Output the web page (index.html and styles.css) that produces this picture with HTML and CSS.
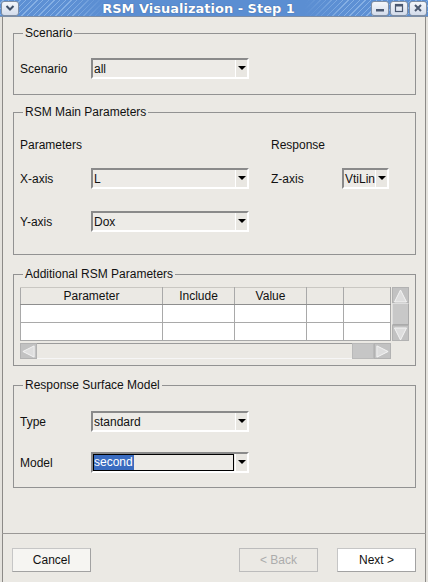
FILE: index.html
```html
<!DOCTYPE html>
<html lang="en">
<head>
    <meta charset="UTF-8">
    <title>RSM Visualization - Step 1</title>
    <link rel="stylesheet" href="styles.css">
</head>
<body>
    <div class="window">
        <div class="titlebar">
            <span class="tb-btn menu">
                <svg width="10" height="8" viewBox="0 0 10 8"><path d="M1.5 2 L5 5.5 L8.5 2" fill="none" stroke="#3f4f66" stroke-width="2"/></svg>
            </span>
            <span class="title">RSM Visualization - Step 1</span>
            <span class="tb-btn">
                <svg width="10" height="10" viewBox="0 0 10 10"><rect x="1" y="6" width="8" height="2.5" fill="#4a5870"/></svg>
            </span>
            <span class="tb-btn">
                <svg width="10" height="10" viewBox="0 0 10 10"><rect x="1.5" y="1.5" width="7" height="7" fill="none" stroke="#4a5870" stroke-width="1.2"/><rect x="1" y="1" width="8" height="2.5" fill="#4a5870"/></svg>
            </span>
            <span class="tb-btn">
                <svg width="10" height="10" viewBox="0 0 10 10"><path d="M2 2 L8 8 M8 2 L2 8" stroke="#4a5870" stroke-width="2"/></svg>
            </span>
        </div>

        <div class="content">
            <!-- scenario -->
            <fieldset class="group g1">
                <legend>Scenario</legend>
                <div class="row">
                    <span class="lbl">Scenario</span>
                    <div class="combo w158"><span class="val">all</span><span class="drop"></span></div>
                </div>
            </fieldset>

            <!-- main parameters -->
            <fieldset class="group g2">
                <legend>RSM Main Parameters</legend>
                <div class="row head">
                    <span class="lbl">Parameters</span>
                    <span class="spacer158"></span>
                    <span class="lbl gap">Response</span>
                </div>
                <div class="row r-x">
                    <span class="lbl">X-axis</span>
                    <div class="combo w158"><span class="val">L</span><span class="drop"></span></div>
                    <span class="lbl gap">Z-axis</span>
                    <div class="combo w47"><span class="val">VtiLin</span><span class="drop"></span></div>
                </div>
                <div class="row r-y">
                    <span class="lbl">Y-axis</span>
                    <div class="combo w158"><span class="val">Dox</span><span class="drop"></span></div>
                </div>
            </fieldset>

            <!-- additional parameters -->
            <fieldset class="group g3">
                <legend>Additional RSM Parameters</legend>
                <div class="tablewrap">
                    <div class="tablecol">
                        <table class="grid">
                            <colgroup>
                                <col style="width:142px"><col style="width:72px"><col style="width:72px"><col style="width:37px"><col style="width:47px">
                            </colgroup>
                            <thead>
                                <tr><th>Parameter</th><th>Include</th><th>Value</th><th></th><th></th></tr>
                            </thead>
                            <tbody>
                                <tr><td></td><td></td><td></td><td></td><td></td></tr>
                                <tr><td></td><td></td><td></td><td></td><td></td></tr>
                            </tbody>
                        </table>
                        <div class="hscroll">
                            <span class="sbtn"><svg width="16" height="15" viewBox="0 0 16 15"><polygon points="14,1.5 2,7.5 14,13.5" fill="#dedede" stroke="#f4f4f4"/></svg></span>
                            <span class="track"></span>
                            <span class="thumb-h"></span>
                            <span class="sbtn"><svg width="16" height="15" viewBox="0 0 16 15"><polygon points="2,1.5 14,7.5 2,13.5" fill="#dedede" stroke="#f4f4f4"/></svg></span>
                        </div>
                    </div>
                    <div class="vscroll">
                        <span class="sbtn v"><svg width="15" height="16" viewBox="0 0 15 16"><polygon points="1.5,14 7.5,2 13.5,14" fill="#dedede" stroke="#f4f4f4"/></svg></span>
                        <span class="thumb-v"></span>
                        <span class="sbtn v"><svg width="15" height="16" viewBox="0 0 15 16"><polygon points="1.5,2 7.5,14 13.5,2" fill="#dedede" stroke="#f4f4f4"/></svg></span>
                    </div>
                </div>
            </fieldset>

            <!-- response surface -->
            <fieldset class="group g4">
                <legend>Response Surface Model</legend>
                <div class="row">
                    <span class="lbl">Type</span>
                    <div class="combo w158"><span class="val">standard</span><span class="drop"></span></div>
                </div>
                <div class="row r-model">
                    <span class="lbl">Model</span>
                    <div class="combo w158 focus"><span class="val"><span class="sel">second</span></span><span class="drop"></span></div>
                </div>
            </fieldset>
        </div>

        <div class="footer">
            <button class="btn">Cancel</button>
            <span class="fill"></span>
            <button class="btn" disabled>&lt; Back</button>
            <button class="btn next">Next &gt;</button>
        </div>
    </div>
</body>
</html>
```

FILE: styles.css
```css
*{
    margin: 0;
    padding: 0;
    box-sizing: border-box;
}
body{
    background: #ebe9e4;
    font-family: "Liberation Sans", Arial, sans-serif;
    font-size: 12px;
    color: #111;
}
.window{
    width: 428px;
    height: 582px;
    display: flex;
    flex-direction: column;
    background: #ebe9e4;
    border-left: 2px solid #e4e2dd;
    border-right: 2px solid #e4e2dd;
    box-shadow: inset 1px 0 #8c8a87, inset -1px 0 #8c8a87;
}

/* title bar */
.titlebar{
    display: flex;
    align-items: center;
    height: 17px;
    margin: 0 -2px 2px;
    padding: 0 1px;
    border-bottom: 1px solid #7d8ea6;
    background:
        linear-gradient(90deg, rgba(91,142,210,0) 0, rgba(91,142,210,0) 70px, #5b8ed2 105px, #5b8ed2 305px, rgba(91,142,210,0) 345px),
        repeating-linear-gradient(135deg, #5d90d4 0 2px, #86b0e4 2px 3px, #5d90d4 3px 4px);
}
.title{
    flex: 1;
    text-align: center;
    padding-left: 8px;
    font-family: "DejaVu Sans", sans-serif;
    font-weight: bold;
    font-size: 13px;
    color: #fff;
    text-shadow: 0 0 1px #2c4e80;
}
.tb-btn{
    display: flex;
    align-items: center;
    justify-content: center;
    width: 18px;
    height: 15px;
    margin-left: 1px;
    border: 1px solid #7f8ea3;
    border-radius: 3px;
    background: linear-gradient(#f4f6fa, #d3dceb);
}
.tb-btn.menu{
    margin-left: 0;
}

/* groups */
.content{
    padding: 7px 10px 0 11px;
}
.group{
    border: 1px solid #929292;
    padding: 0 6px;
    margin: 0;
    min-width: 0;
}
.group legend{
    margin-left: 3px;
    padding: 0 2px;
    line-height: 14px;
}
.g1{
    padding-top: 18px;
    padding-bottom: 15px;
}
.g2{
    margin-top: 10px;
    padding-top: 15px;
    padding-bottom: 22px;
}
.g3{
    margin-top: 12px;
    padding-top: 6px;
    padding-bottom: 6px;
}
.g4{
    margin-top: 12px;
    padding-top: 19px;
    padding-bottom: 14px;
}
.row{
    display: flex;
    align-items: center;
    height: 21px;
}
.r-x{
    margin-top: 13px;
}
.r-y{
    margin-top: 22px;
}
.r-model{
    margin-top: 20px;
}
.lbl{
    width: 71px;
    flex-shrink: 0;
    white-space: nowrap;
}
.lbl.gap{
    margin-left: 22px;
}
.spacer158{
    width: 158px;
}

/* combo box */
.combo{
    display: flex;
    height: 21px;
    border-style: solid;
    border-width: 2px;
    border-color: #8a8a8a #fff #fff #8a8a8a;
    background: #edebe7;
    overflow: hidden;
}
.w158{
    width: 158px;
}
.w47{
    width: 47px;
}
.combo .val{
    flex: 1;
    display: flex;
    align-items: center;
    padding-left: 1px;
    white-space: nowrap;
    overflow: hidden;
}
.combo .drop{
    position: relative;
    width: 12px;
    flex-shrink: 0;
    border-left: 1px solid #fff;
    background: #e9e7e2;
}
.combo .drop::after{
    content: "";
    position: absolute;
    left: 2px;
    top: 6px;
    border-left: 4px solid transparent;
    border-right: 4px solid transparent;
    border-top: 4px solid #000;
}
.combo.focus .val{
    margin: 0 1px 0 0;
    padding-left: 0;
    border: 1px solid #000;
}
.combo .sel{
    background: #3a6cc0;
    color: #fff;
    line-height: 15px;
    padding-right: 1px;
}

/* table */
.tablewrap{
    display: flex;
    align-items: flex-start;
    gap: 1px;
}
.tablecol{
    width: 371px;
}
.grid{
    width: 371px;
    table-layout: fixed;
    border-collapse: collapse;
}
.grid th,
.grid td{
    border: 1px solid #a9a9a9;
}
.grid th{
    height: 17px;
    font-weight: normal;
    background: #ebe9e4;
    border-top-color: #c9c7c2;
    border-bottom-color: #8e8e8e;
}
.grid td{
    height: 18px;
    background: #fff;
}
.hscroll{
    display: flex;
    height: 16px;
    margin-top: 2px;
}
.sbtn{
    display: flex;
    width: 17px;
    background: #c2c2c2;
    border: 1px solid #b2b2b2;
}
.track{
    flex: 1;
    background: #ebe9e4;
    border-top: 1px solid #9b9b9b;
    border-bottom: 1px solid #f6f6f6;
}
.thumb-h{
    width: 22px;
    background: #c6c6c6;
    border: 1px solid #b9b9b9;
}
.vscroll{
    display: flex;
    flex-direction: column;
    width: 17px;
    height: 54px;
    background: #c2c2c2;
}
.sbtn.v{
    width: 17px;
    height: 16px;
}
.thumb-v{
    flex: 1;
    background: #c8c8c8;
    border: 1px solid #dedede;
    border-right-color: #aaa;
    border-bottom-color: #aaa;
}

/* footer buttons */
.footer{
    display: flex;
    align-items: flex-start;
    margin-top: auto;
    height: 49px;
    padding: 14px 10px 0 10px;
    border-top: 1px solid #9a9896;
}
.fill{
    flex: 1;
}
.btn{
    width: 79px;
    height: 24px;
    font-family: "Liberation Sans", Arial, sans-serif;
    font-size: 12px;
    color: #111;
    background: #f6f5f2;
    border: 1px solid #a2a2a2;
    border-top-color: #c6c6c6;
    border-left-color: #c6c6c6;
}
.btn:disabled{
    color: #acacac;
    background: #ebe9e4;
    border-color: #bcbcbc;
}
.btn.next{
    margin-left: 19px;
    background: #fff;
}
```
